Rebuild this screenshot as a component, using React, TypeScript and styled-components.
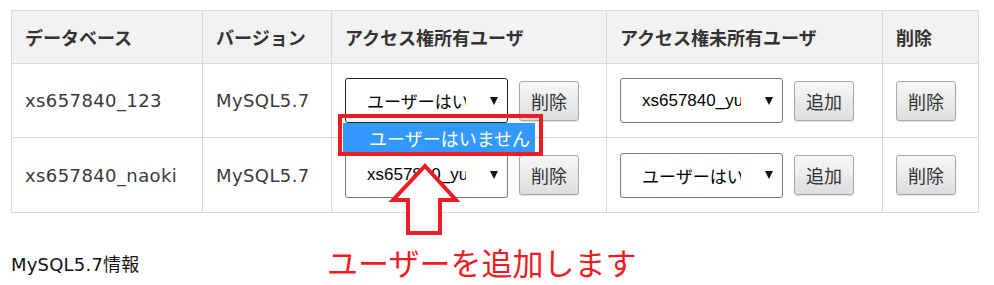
import React from "react";
import styled, { createGlobalStyle } from "styled-components";

const GlobalStyle = createGlobalStyle`
  html, body { margin: 0; padding: 0; background: #fff; }
  body {
    font-family: "DejaVu Sans", "Noto Sans CJK JP", sans-serif;
    color: #333;
  }
`;

const Page = styled.div`
  position: relative;
  width: 994px;
  height: 285px;
  padding: 10px 0 0 11px;
  box-sizing: border-box;
  overflow: hidden;
`;

const Table = styled.table`
  border-collapse: collapse;
  table-layout: fixed;
  width: 967px;
  font-size: 18px;
`;

const Col = styled.col<{ $w: number }>`
  width: ${(p) => p.$w}px;
`;

const HeadCell = styled.th`
  box-sizing: border-box;
  height: 53px;
  padding: 0 13px;
  background: #f2f2f2;
  border: 1px solid #d9d9d9;
  text-align: left;
  font-weight: bold;
  color: #333;
  white-space: nowrap;
  font-family: "DejaVu Sans", "Noto Sans CJK JP", sans-serif;
`;

const Row = styled.tr<{ $h: number }>`
  height: ${(p) => p.$h}px;
`;

const Cell = styled.td`
  box-sizing: border-box;
  padding: 0 13px;
  border: 1px solid #d9d9d9;
  color: #3a3a3a;
  letter-spacing: 0.4px;
  vertical-align: middle;
  white-space: nowrap;
`;

const Controls = styled.div`
  display: flex;
  align-items: center;
  gap: 11px;
  letter-spacing: 0;
`;

const SelectBox = styled.div<{ $focused?: boolean }>`
  box-sizing: border-box;
  width: 163px;
  height: 45px;
  display: flex;
  align-items: center;
  padding: 0 9px 0 21px;
  border: 1px solid ${(p) => (p.$focused ? "#222" : "#7a7a7a")};
  border-radius: 3px;
  background: #fff;
  font-family: "Liberation Sans", "Noto Sans CJK JP", sans-serif;
  font-size: 17px;
  color: #000;
`;

const SelectText = styled.span`
  width: 99px;
  overflow: hidden;
  white-space: nowrap;
`;

const Caret = styled.span`
  margin-left: auto;
  width: 0;
  height: 0;
  border-left: 4px solid transparent;
  border-right: 4px solid transparent;
  border-top: 8px solid #111;
`;

const Button = styled.button`
  box-sizing: border-box;
  width: 60px;
  height: 40px;
  padding: 0;
  border: 1px solid #a8a8a8;
  border-radius: 3px;
  background: linear-gradient(#f7f7f7, #dedede);
  box-shadow: 0 1px 1px rgba(0, 0, 0, 0.12);
  font-family: "Noto Sans CJK JP", sans-serif;
  font-size: 18px;
  letter-spacing: 0;
  color: #333;
  cursor: pointer;
`;

const InfoTitle = styled.p`
  margin: 41px 0 0;
  font-size: 18px;
  line-height: 21px;
  letter-spacing: 0.2px;
  color: #111;
  font-family: "DejaVu Sans", "Noto Sans CJK JP", sans-serif;
`;

const DropdownOption = styled.div`
  position: absolute;
  left: 343px;
  top: 123px;
  width: 192px;
  height: 30px;
  box-sizing: border-box;
  padding-left: 26px;
  background: #3399ff;
  color: #fff;
  font-family: "Noto Sans CJK JP", sans-serif;
  font-size: 18px;
  line-height: 30px;
  white-space: nowrap;
`;

const HighlightBox = styled.div`
  position: absolute;
  left: 338px;
  top: 114px;
  width: 205px;
  height: 42px;
  box-sizing: border-box;
  border: 4px solid #ee1c25;
`;

const ArrowSvg = styled.svg`
  position: absolute;
  left: 388px;
  top: 160px;
`;

const Note = styled.div`
  position: absolute;
  left: 327px;
  top: 246px;
  font-family: "Noto Sans CJK JP", sans-serif;
  font-size: 31px;
  line-height: 31px;
  color: #ee1c25;
  white-space: nowrap;
`;

type RowData = {
  db: string;
  version: string;
  owner: string;
  ownerFocused?: boolean;
  other: string;
  h: number;
};

const rows: RowData[] = [
  { db: "xs657840_123", version: "MySQL5.7", owner: "ユーザーはいません", ownerFocused: true, other: "xs657840_yuki", h: 74 },
  { db: "xs657840_naoki", version: "MySQL5.7", owner: "xs657840_yuki", other: "ユーザーはいません", h: 75 },
];

const Select = ({ value, focused }: { value: string; focused?: boolean }) => (
  <SelectBox $focused={focused}>
    <SelectText>{value}</SelectText>
    <Caret />
  </SelectBox>
);

export default function App() {
  return (
    <>
      <GlobalStyle />
      <Page>
        <Table>
          <colgroup>
            <Col $w={191} />
            <Col $w={129} />
            <Col $w={275} />
            <Col $w={276} />
            <Col $w={96} />
          </colgroup>
          <thead>
            <tr>
              <HeadCell>データベース</HeadCell>
              <HeadCell>バージョン</HeadCell>
              <HeadCell>アクセス権所有ユーザ</HeadCell>
              <HeadCell>アクセス権未所有ユーザ</HeadCell>
              <HeadCell>削除</HeadCell>
            </tr>
          </thead>
          <tbody>
            {rows.map((r) => (
              <Row key={r.db} $h={r.h}>
                <Cell>{r.db}</Cell>
                <Cell>{r.version}</Cell>
                <Cell>
                  <Controls>
                    <Select value={r.owner} focused={r.ownerFocused} />
                    <Button>削除</Button>
                  </Controls>
                </Cell>
                <Cell>
                  <Controls>
                    <Select value={r.other} />
                    <Button>追加</Button>
                  </Controls>
                </Cell>
                <Cell>
                  <Button>削除</Button>
                </Cell>
              </Row>
            ))}
          </tbody>
        </Table>
        <InfoTitle>MySQL5.7情報</InfoTitle>

        <DropdownOption>ユーザーはいません</DropdownOption>
        <HighlightBox />
        <ArrowSvg width="76" height="80" viewBox="0 0 76 80">
          <polygon
            points="37,6 68,40 52,40 52,73 20,73 20,40 5,40"
            fill="#fff"
            stroke="#ee1c25"
            strokeWidth="4"
            strokeLinejoin="miter"
          />
        </ArrowSvg>
        <Note>ユーザーを追加します</Note>
      </Page>
    </>
  );
}
